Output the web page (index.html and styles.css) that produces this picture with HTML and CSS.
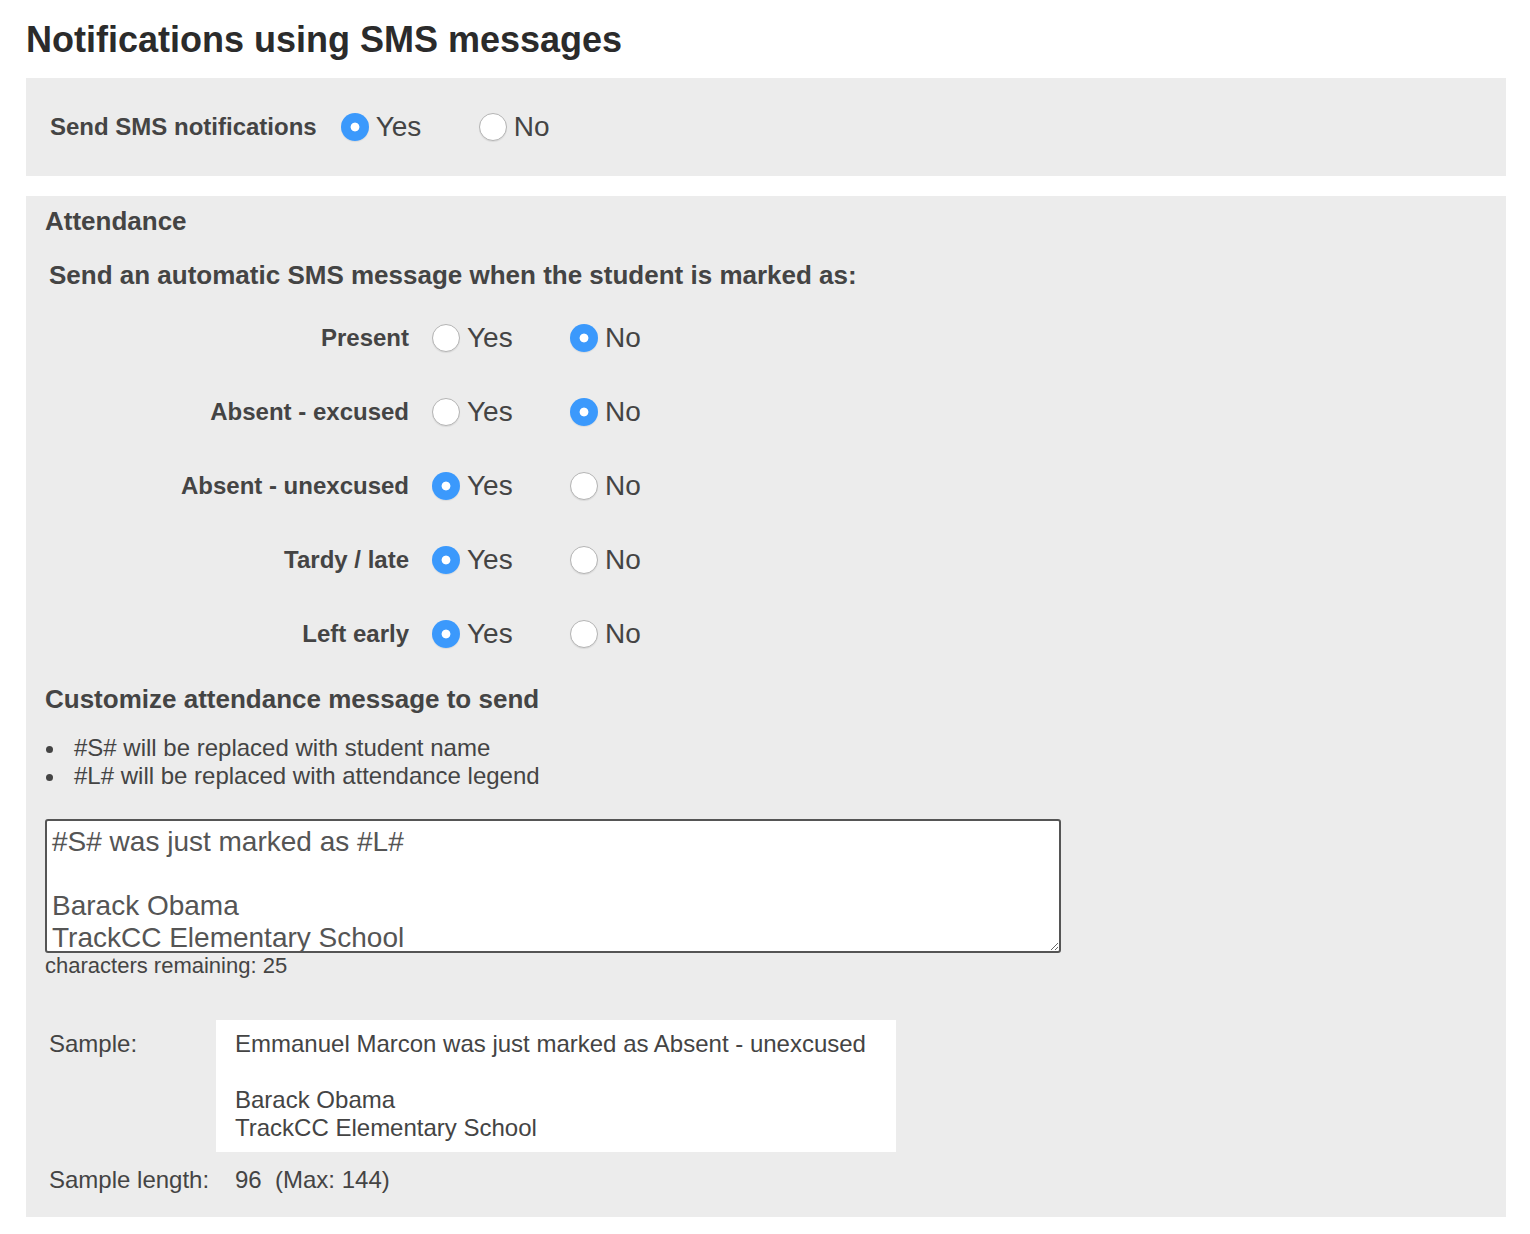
FILE: index.html
```html
<!DOCTYPE html>
<html lang="en">
<head>
    <meta charset="UTF-8">
    <title>SMS Notifications</title>
    <link rel="stylesheet" href="styles.css">
</head>
<body>
<div class="page">
    <h1>Notifications using SMS messages</h1>

    <div class="panel panel-top">
        <span class="label">Send SMS notifications</span>
        <label class="option"><input type="radio" name="sms" checked> Yes</label>
        <label class="option"><input type="radio" name="sms"> No</label>
    </div>

    <div class="panel panel-main">
        <h2>Attendance</h2>
        <div class="intro">Send an automatic SMS message when the student is marked as:</div>

        <div class="rows">
            <div class="row">
                <span class="row-label">Present</span>
                <label class="option"><input type="radio" name="present"> Yes</label>
                <label class="option"><input type="radio" name="present" checked> No</label>
            </div>
            <div class="row">
                <span class="row-label">Absent - excused</span>
                <label class="option"><input type="radio" name="excused"> Yes</label>
                <label class="option"><input type="radio" name="excused" checked> No</label>
            </div>
            <div class="row">
                <span class="row-label">Absent - unexcused</span>
                <label class="option"><input type="radio" name="unexcused" checked> Yes</label>
                <label class="option"><input type="radio" name="unexcused"> No</label>
            </div>
            <div class="row">
                <span class="row-label">Tardy / late</span>
                <label class="option"><input type="radio" name="tardy" checked> Yes</label>
                <label class="option"><input type="radio" name="tardy"> No</label>
            </div>
            <div class="row">
                <span class="row-label">Left early</span>
                <label class="option"><input type="radio" name="early" checked> Yes</label>
                <label class="option"><input type="radio" name="early"> No</label>
            </div>
        </div>

        <h2 class="custom">Customize attendance message to send</h2>
        <ul class="hints">
            <li>#S# will be replaced with student name</li>
            <li>#L# will be replaced with attendance legend</li>
        </ul>

        <textarea class="message">#S# was just marked as #L#

Barack Obama
TrackCC Elementary School</textarea>
        <div class="remaining">characters remaining: 25</div>

        <div class="sample">
            <span class="sample-label">Sample:</span>
            <div class="sample-box">Emmanuel Marcon was just marked as Absent - unexcused<br><br>Barack Obama<br>TrackCC Elementary School</div>
            <span class="sample-label length">Sample length:</span>
            <span class="sample-value">96&nbsp; (Max: 144)</span>
        </div>
    </div>
</div>
</body>
</html>
```

FILE: styles.css
```css
body {
    margin: 0;
    font-family: "Liberation Sans", Arial, sans-serif;
    color: #444;
    background-color: #fff;
}
.page {
    padding: 0 24px 0 26px;
}
h1 {
    margin: 18px 0 16px;
    font-size: 36px;
    line-height: 44px;
    color: #2b2b2b;
}
.panel {
    background-color: #ececec;
}
.panel-top {
    height: 98px;
    padding: 0 24px;
    display: flex;
    align-items: center;
}
.panel-top .label {
    font-size: 24px;
    font-weight: bold;
    margin-right: 24px;
}
.option {
    display: flex;
    align-items: center;
    width: 138px;
    font-size: 28px;
    line-height: 30px;
    color: #444;
}
.option input {
    appearance: none;
    -webkit-appearance: none;
    width: 28px;
    height: 28px;
    margin: 0 7px 0 0;
    border-radius: 50%;
    border: 1px solid #b4b4b4;
    background-color: #fff;
    box-shadow: 0 1px 1px rgba(0, 0, 0, 0.08);
    box-sizing: border-box;
    flex: none;
}
.option input:checked {
    border: none;
    background: radial-gradient(circle, #fff 0, #fff 4px, #3b99fc 4.8px);
}
.panel-main {
    margin-top: 20px;
    padding: 10px 19px 23px;
}
h2 {
    margin: 0;
    font-size: 26px;
    line-height: 30px;
}
.intro {
    margin-top: 24px;
    padding-left: 4px;
    font-size: 26px;
    line-height: 30px;
    font-weight: bold;
}
.rows {
    margin-top: 11px;
}
.row {
    height: 74px;
    display: flex;
    align-items: center;
}
.row-label {
    width: 364px;
    margin-right: 23px;
    text-align: right;
    font-size: 24px;
    font-weight: bold;
}
h2.custom {
    margin-top: 13px;
}
.hints {
    margin: 20px 0 0;
    padding-left: 22px;
    font-size: 24px;
    line-height: 28px;
}
.hints li {
    padding-left: 7px;
}
.message {
    display: block;
    margin-top: 29px;
    width: 1016px;
    height: 134px;
    box-sizing: border-box;
    padding: 5px 5px 0;
    border: 2px solid #555;
    border-radius: 3px;
    font-family: "Liberation Sans", Arial, sans-serif;
    font-size: 28px;
    line-height: 32px;
    color: #555;
    overflow: hidden;
}
.remaining {
    margin-top: 1px;
    font-size: 22px;
    line-height: 24px;
}
.sample {
    margin-top: 42px;
    margin-left: 4px;
    display: grid;
    grid-template-columns: 167px auto;
    row-gap: 14px;
    align-items: start;
    font-size: 24px;
    line-height: 28px;
}
.sample-label {
    padding-top: 10px;
}
.sample-label.length {
    padding-top: 0;
}
.sample-box {
    width: 680px;
    box-sizing: border-box;
    padding: 10px 19px;
    background-color: #fff;
}
.sample-value {
    padding-left: 19px;
}
```
